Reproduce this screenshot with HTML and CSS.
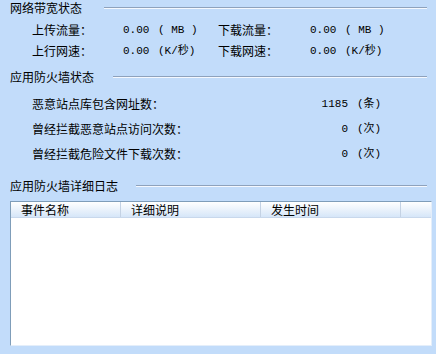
FILE: index.html
```html
<!DOCTYPE html>
<html lang="zh-CN">
<head>
  <meta charset="UTF-8" />
  <title>防火墙状态</title>
  <link rel="stylesheet" href="styles.css">
</head>
<body>
  <div class="panel">
    <div class="group-title t1"><span>网络带宽状态</span><div class="rule"></div></div>
    <div class="net-grid">
      <span class="label">上传流量：</span><span class="num">0.00</span><span class="unit">( MB )</span>
      <span class="label">下载流量：</span><span class="num">0.00</span><span class="unit">( MB )</span>
      <span class="label">上行网速：</span><span class="num">0.00</span><span class="unit">(K/秒)</span>
      <span class="label">下载网速：</span><span class="num">0.00</span><span class="unit">(K/秒)</span>
    </div>

    <div class="group-title t2"><span>应用防火墙状态</span><div class="rule"></div></div>
    <div class="fw-list">
      <div class="fw-row"><span class="fw-label">恶意站点库包含网址数：</span><span class="fw-count">1185</span><span class="fw-unit">(条)</span></div>
      <div class="fw-row"><span class="fw-label">曾经拦截恶意站点访问次数：</span><span class="fw-count">0</span><span class="fw-unit">(次)</span></div>
      <div class="fw-row"><span class="fw-label">曾经拦截危险文件下载次数：</span><span class="fw-count">0</span><span class="fw-unit">(次)</span></div>
    </div>

    <div class="group-title t3"><span>应用防火墙详细日志</span><div class="rule"></div></div>
    <div class="log">
      <div class="log-head">
        <div class="col c1">事件名称</div>
        <div class="col c2">详细说明</div>
        <div class="col c3">发生时间</div>
        <div class="col c4"></div>
      </div>
      <div class="log-body"></div>
    </div>
  </div>
</body>
</html>
```

FILE: styles.css
```css
body {
  margin: 0;
  background: #c2dcfa;
  color: #000;
  font-family: "Noto Sans CJK SC", "Liberation Sans", sans-serif;
  font-size: 12px;
}
.panel {
  width: 436px;
  height: 354px;
  padding-top: 1px;
  box-sizing: border-box;
  display: flex;
  flex-direction: column;
}
.group-title {
  display: flex;
  align-items: center;
  height: 14px;
  line-height: 14px;
  padding-left: 10px;
  padding-right: 9px;
}
.group-title .rule {
  flex: 1;
  height: 0;
  border-top: 1px solid #8ea2bc;
  border-bottom: 1px solid #f4f8fe;
}
.t1 .rule { margin-left: 22px; }
.t2 { margin-top: 12px; }
.t2 .rule { margin-left: 19px; }
.t3 { margin-top: 18px; }
.t3 .rule { margin-left: 18px; }

.net-grid {
  margin-top: 8px;
  padding-left: 32px;
  display: grid;
  grid-template-columns: 91px 35px 60px 92px 35px 60px;
  grid-auto-rows: 14px;
  row-gap: 7px;
  line-height: 14px;
}
.num, .unit, .fw-count, .fw-unit {
  font-family: "Liberation Mono", "Noto Sans CJK SC", monospace;
  font-size: 11px;
}

.fw-list {
  margin-top: 13px;
  padding-left: 32px;
  display: flex;
  flex-direction: column;
  gap: 11px;
}
.fw-row {
  display: flex;
  height: 14px;
  line-height: 14px;
}
.fw-label { width: 256px; }
.fw-count {
  width: 60px;
  text-align: right;
}
.fw-unit { margin-left: 9px; }

.log {
  margin: 8px 0 0 10px;
  width: 422px;
  height: 145px;
  box-sizing: border-box;
  border-top: 1px solid #7f9db9;
  border-left: 1px solid #7f9db9;
  border-right: 1px solid #e4eefa;
  border-bottom: 1px solid #e4eefa;
  background: #fff;
  display: flex;
  flex-direction: column;
}
.log-head {
  display: flex;
  height: 15px;
  line-height: 15px;
  background: linear-gradient(#ffffff, #d6e6f8);
  border-bottom: 1px solid #c8d8ec;
}
.col {
  box-sizing: border-box;
  padding-left: 10px;
  border-right: 1px solid #c4d2e4;
}
.c1 { width: 110px; }
.c2 { width: 140px; }
.c3 { width: 140px; }
.c4 { flex: 1; border-right: none; }
.log-body { flex: 1; }
```
